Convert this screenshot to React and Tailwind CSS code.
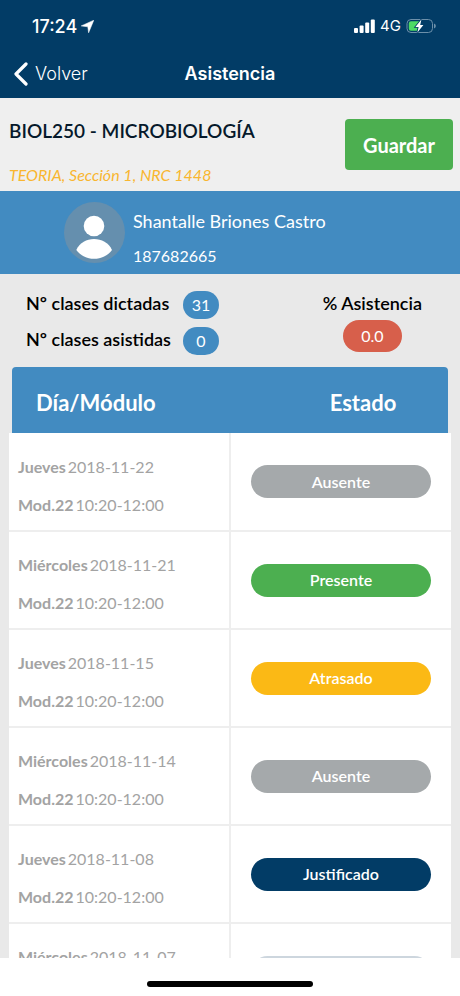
import React, { useState } from 'react';

const CLASSES = [
  { id: 1, day: 'Jueves', date: '2018-11-22', module: 'Mod.22', time: '10:20-12:00', status: 'Ausente' },
  { id: 2, day: 'Miércoles', date: '2018-11-21', module: 'Mod.22', time: '10:20-12:00', status: 'Presente' },
  { id: 3, day: 'Jueves', date: '2018-11-15', module: 'Mod.22', time: '10:20-12:00', status: 'Atrasado' },
  { id: 4, day: 'Miércoles', date: '2018-11-14', module: 'Mod.22', time: '10:20-12:00', status: 'Ausente' },
  { id: 5, day: 'Jueves', date: '2018-11-08', module: 'Mod.22', time: '10:20-12:00', status: 'Justificado' },
  { id: 6, day: 'Miércoles', date: '2018-11-07', module: 'Mod.22', time: '10:20-12:00', status: 'Pendiente' }
];

const STATUS_CYCLE = ['Ausente', 'Presente', 'Atrasado', 'Justificado'];

const getStatusStyles = (status) => {
  switch (status) {
    case 'Presente':
      return 'bg-[#4caf50]';
    case 'Atrasado':
      return 'bg-[#fbb915]';
    case 'Justificado':
      return 'bg-[#023c66]';
    case 'Ausente':
      return 'bg-[#a5a9ab]';
    default:
      return 'bg-[#cdd6de]';
  }
};

const StatusBar = () => (
  <div className="h-[50px] pl-8 pr-6 pt-[2px] flex items-center justify-between">
    <div className="flex items-center gap-1">
      <span className="text-[18px] font-medium">17:24</span>
      <svg width="13" height="13" viewBox="0 0 13 13" fill="currentColor" aria-hidden="true">
        <path d="M12.8 0.2 L7.6 12.8 L6.8 6.8 L0.2 5.9 Z" stroke="currentColor" strokeWidth="0.5" strokeLinejoin="round" />
      </svg>
    </div>
    <div className="flex items-center gap-[5px]">
      <svg width="21" height="14" viewBox="0 0 21 14" fill="currentColor" aria-hidden="true">
        <rect x="0" y="9" width="4" height="5" rx="1" />
        <rect x="5.6" y="6.5" width="4" height="7.5" rx="1" />
        <rect x="11.2" y="3.5" width="4" height="10.5" rx="1" />
        <rect x="16.8" y="0.5" width="4" height="13.5" rx="1" />
      </svg>
      <span className="text-[15px]">4G</span>
      <svg width="30" height="16" viewBox="0 0 30 16" aria-hidden="true">
        <rect x="1" y="1.5" width="25.5" height="13" rx="4" fill="none" stroke="#6d90aa" strokeWidth="1" />
        <path d="M28 5.5 a2.6 2.6 0 0 1 0 5 Z" fill="#6d90aa" />
        <path d="M5 3.2 H14 L11 12.8 H5 A2.2 2.2 0 0 1 2.8 10.6 V5.4 A2.2 2.2 0 0 1 5 3.2 Z" fill="#4cd964" />
        <path d="M15.4 1.6 L9.4 8.9 H12.6 L11.4 14.4 L17.4 7 H14.2 Z" fill="#fff" stroke="#023c66" strokeWidth="1.6" paintOrder="stroke" />
      </svg>
    </div>
  </div>
);

const NavBar = () => (
  <div className="h-12 px-3 grid grid-cols-[1fr_auto_1fr] items-center">
    <button type="button" className="flex items-center gap-[7px] justify-self-start text-lg font-light">
      <svg width="16" height="24" viewBox="0 0 16 24" fill="none" stroke="currentColor" strokeWidth="3.2" strokeLinecap="round" strokeLinejoin="round" aria-hidden="true">
        <path d="M14 2 L4 12 L14 22" />
      </svg>
      Volver
    </button>
    <h1 className="text-lg font-semibold">Asistencia</h1>
  </div>
);

const Avatar = () => (
  <svg width="61" height="61" viewBox="0 0 61 61" aria-hidden="true" className="shrink-0">
    <circle cx="30.5" cy="30.5" r="30.5" fill="#658fae" />
    <circle cx="30" cy="24" r="10.3" fill="#fff" />
    <path d="M12.3 48 C16 40.5 22.5 37 30 37 C37.5 37 44.5 40.5 48 48 C44 53.5 37 56.8 30 56.8 C23 56.8 16.5 53.5 12.3 48 Z" fill="#fff" />
  </svg>
);

const App = () => {
  const [classes, setClasses] = useState(CLASSES);

  const handleStatusChange = (id) => {
    setClasses(classes.map((item) => {
      if (item.id !== id) return item;
      const next = (STATUS_CYCLE.indexOf(item.status) + 1) % STATUS_CYCLE.length;
      return { ...item, status: STATUS_CYCLE[next] };
    }));
  };

  return (
    <div className="h-dvh flex flex-col bg-white font-['Lato',sans-serif]">
      <header className="bg-[#023c66] text-white font-['Inter',sans-serif]">
        <StatusBar />
        <NavBar />
      </header>

      <main className="flex-1 min-h-0 overflow-y-auto [scrollbar-width:none] bg-[#e9e9e9]">
        {/* Course */}
        <section className="h-[93px] pl-[9px] pr-[7px] flex items-center justify-between bg-[#efefef]">
          <div className="pt-[17px] flex flex-col gap-5">
            <h2 className="text-[19px] leading-6 font-semibold text-[#06192b]">BIOL250 - MICROBIOLOGÍA</h2>
            <p className="text-base leading-6 italic text-[#f9b62f]">TEORIA, Sección 1, NRC 1448</p>
          </div>
          <button type="button" className="w-[108px] h-[51px] rounded bg-[#4caf50] text-white text-xl font-bold">
            Guardar
          </button>
        </section>

        {/* Student */}
        <section className="h-[83px] pl-16 flex items-center gap-2 bg-[#428bc1] text-white">
          <Avatar />
          <div className="pt-3 flex flex-col gap-[11px]">
            <p className="text-lg leading-6">Shantalle Briones Castro</p>
            <p className="text-base leading-6">187682665</p>
          </div>
        </section>

        {/* Summary */}
        <section className="pl-[26px] pr-[38px] pt-[17px] pb-3 flex justify-between text-black">
          <dl className="grid grid-cols-[auto_auto] items-start gap-x-3 gap-y-2">
            <dt className="text-lg leading-6 font-semibold">Nº clases dictadas</dt>
            <dd className="w-9 h-7 rounded-full bg-[#428bc1] text-white text-base leading-7 text-center">31</dd>
            <dt className="text-lg leading-6 font-semibold">Nº clases asistidas</dt>
            <dd className="w-9 h-7 rounded-full bg-[#428bc1] text-white text-base leading-7 text-center">0</dd>
          </dl>
          <dl className="flex flex-col items-center gap-[5px]">
            <dt className="text-lg leading-6 font-semibold">% Asistencia</dt>
            <dd className="w-[59px] h-8 rounded-full bg-[#d75f4b] text-white text-base leading-8 text-center">0.0</dd>
          </dl>
        </section>

        {/* Classes */}
        <div className="px-[9px]">
          <table className="w-full table-fixed border-collapse">
            <thead>
              <tr>
                <th scope="col" className="p-0 pl-[3px]">
                  <div className="h-[66px] pl-6 pt-1 flex items-center rounded-tl bg-[#428bc1] text-white text-[22px] font-bold">
                    Día/Módulo
                  </div>
                </th>
                <th scope="col" className="p-0 pr-[3px]">
                  <div className="h-[66px] pl-12 pt-1 flex items-center justify-center rounded-tr bg-[#428bc1] text-white text-[22px] font-bold">
                    Estado
                  </div>
                </th>
              </tr>
            </thead>
            <tbody className="bg-white">
              {classes.map((item) => (
                <tr key={item.id} className="h-[98px] border-b-2 border-[#eeeeee]">
                  <td className="p-0 pt-2 pl-[9px] border-r-2 border-[#eeeeee] text-base leading-6 text-[#a3a3a3]">
                    <p className="mb-[14px] flex gap-[2px]"><b>{item.day}</b> <span>{item.date}</span></p>
                    <p className="flex gap-[2px]"><b>{item.module}</b> <span>{item.time}</span></p>
                  </td>
                  <td className="p-0 px-5">
                    <button
                      type="button"
                      onClick={() => handleStatusChange(item.id)}
                      className={`block w-full h-[33px] rounded-full text-white text-base font-semibold ${getStatusStyles(item.status)}`}
                    >
                      {item.status}
                    </button>
                  </td>
                </tr>
              ))}
            </tbody>
          </table>
        </div>
      </main>

      <footer className="h-[38px] shrink-0 pt-[23px] bg-white">
        <div className="w-[36%] h-[6px] mx-auto rounded-full bg-black" />
      </footer>
    </div>
  );
};

export default App;
